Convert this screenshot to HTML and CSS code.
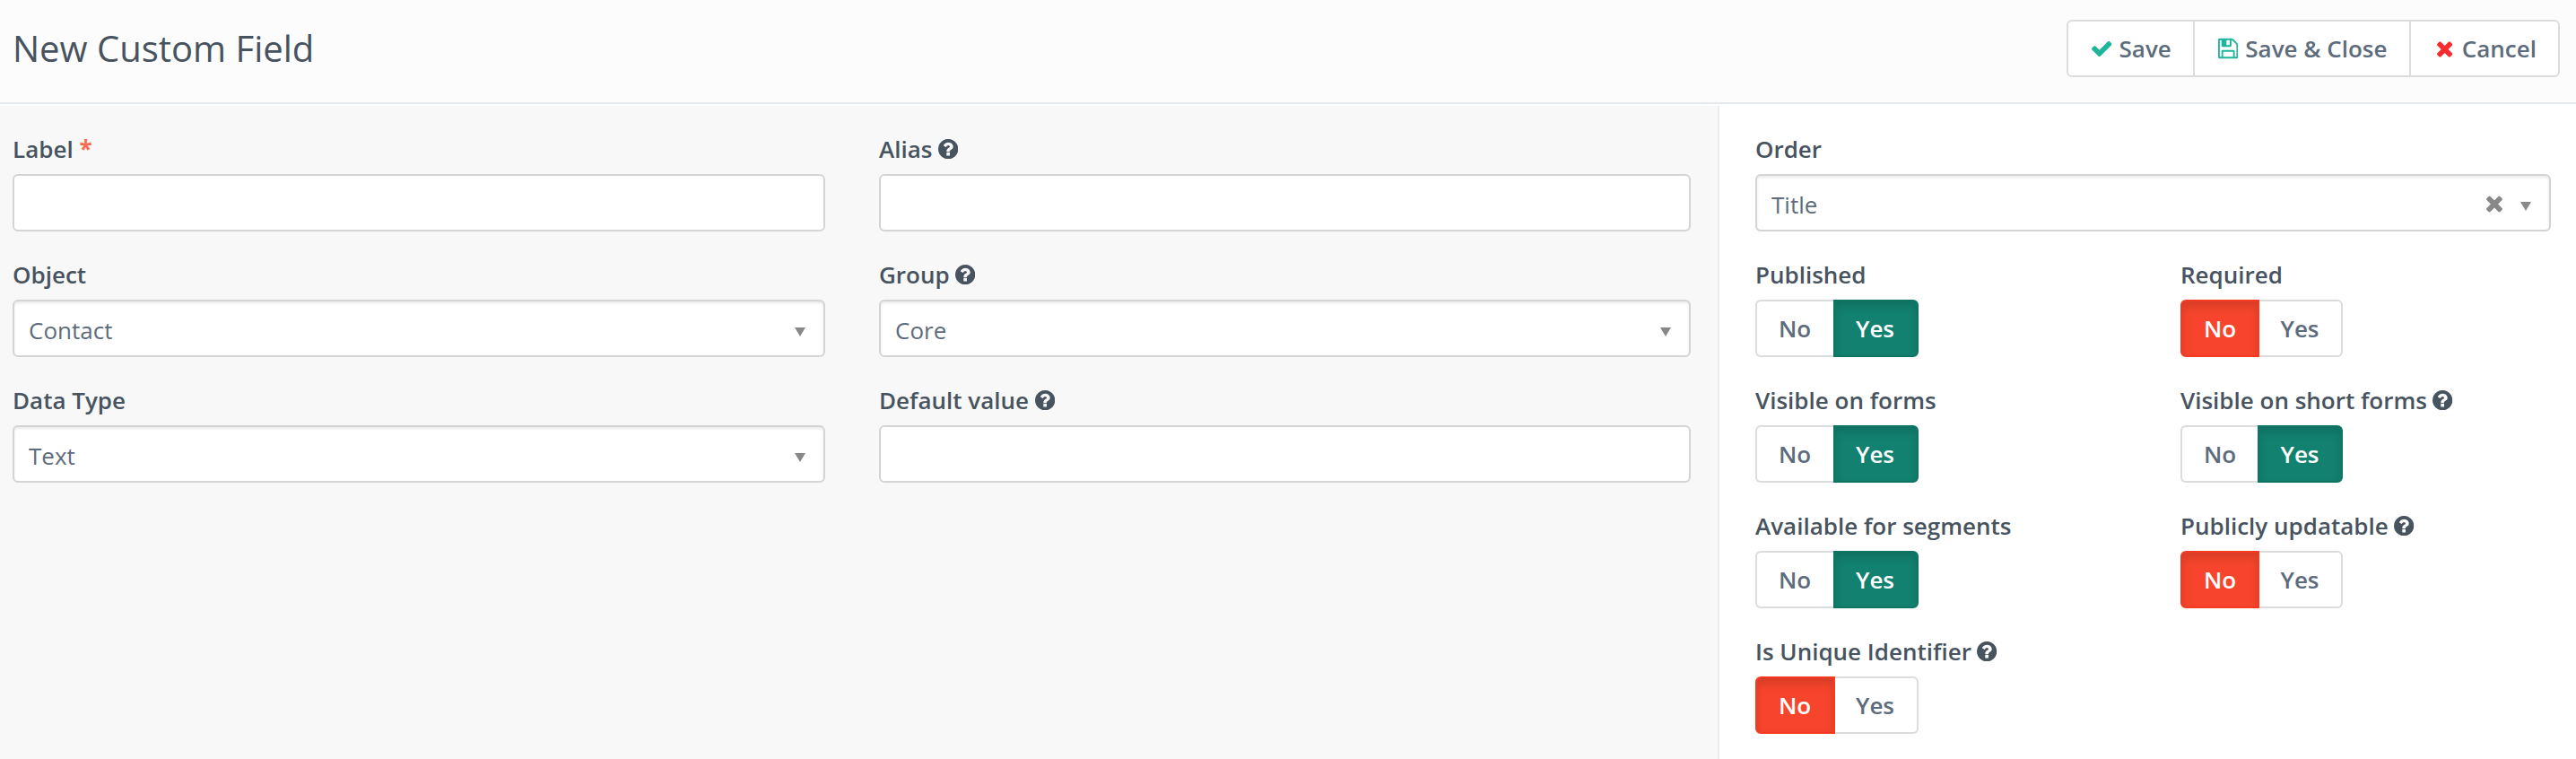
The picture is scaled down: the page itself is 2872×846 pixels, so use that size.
FILE: index.html
```html
<!DOCTYPE html>
<html lang="en">
<head>
<meta charset="utf-8">
<title>New Custom Field</title>
<link rel="stylesheet" href="styles.css">
</head>
<body>
<svg class="sprite" aria-hidden="true">
  <symbol id="check" viewBox="121 0 1550 1792"><path d="M1671 566q0 40-28 68l-724 724-136 136q-28 28-68 28t-68-28l-136-136-362-362q-28-28-28-68t28-68l136-136q28-28 68-28t68 28l294 295 656-657q28-28 68-28t68 28l136 136q28 28 28 68z"/></symbol>
  <symbol id="floppy" viewBox="128 0 1536 1792"><path d="M512 1536h768v-384h-768v384zm896 0h128v-896q0-14-10-38.500t-20-34.500l-281-281q-10-10-34-20t-39-10v416q0 40-28 68t-68 28h-576q-40 0-68-28t-28-68v-416h-128v1280h128v-416q0-40 28-68t68-28h832q40 0 68 28t28 68v416zm-384-928v-320q0-13-9.500-22.500t-22.500-9.500h-192q-13 0-22.500 9.500t-9.500 22.500v320q0 13 9.500 22.500t22.500 9.500h192q13 0 22.500-9.500t9.500-22.500zm640 32v928q0 40-28 68t-68 28h-1344q-40 0-68-28t-28-68v-1344q0-40 28-68t68-28h928q40 0 88 20t76 48l280 280q28 28 48 76t20 88z"/></symbol>
  <symbol id="times" viewBox="302 0 1188 1792"><path d="M1490 1322q0 40-28 68l-136 136q-28 28-68 28t-68-28l-294-294-294 294q-28 28-68 28t-68-28l-136-136q-28-28-28-68t28-68l294-294-294-294q-28-28-28-68t28-68l136-136q28-28 68-28t68 28l294 294 294-294q28-28 68-28t68 28l136 136q28 28 28 68t-28 68l-294 294 294 294q28 28 28 68z"/></symbol>
  <symbol id="help" viewBox="128 128 1536 1536"><path d="M1024 1376v-192q0-14-9-23t-23-9h-192q-14 0-23 9t-9 23v192q0 14 9 23t23 9h192q14 0 23-9t9-23zm256-672q0-88-55.500-163t-138.500-116-170-41q-243 0-371 213-15 24 8 42l132 100q7 6 19 6 16 0 25-12 53-68 86-92 34-24 86-24 48 0 85.500 26t37.500 59q0 38-20 61t-68 45q-63 28-115.500 86.500t-52.500 125.500v36q0 14 9 23t23 9h192q14 0 23-9t9-23q0-19 21.500-49.500t54.500-49.500q32-18 49-28.500t46-35 44.500-48 28-60.500 12.500-81zm384 192q0 209-103 385.500t-279.500 279.500-385.500 103-385.500-103-279.500-279.500-103-385.500 103-385.500 279.500-279.500 385.500-103 385.500 103 279.500 279.500 103 385.500z"/></symbol>
  <symbol id="caret" viewBox="0 0 12 10"><path d="M0 0h12l-6 10z"/></symbol>
</svg>

<header class="page-header">
  <h1 class="title">New Custom Field</h1>
  <div class="actions">
    <button class="action action-save"><svg class="icon icon-check"><use href="#check"/></svg><span>Save</span></button>
    <button class="action action-close"><svg class="icon icon-floppy"><use href="#floppy"/></svg><span>Save &amp; Close</span></button>
    <button class="action action-cancel"><svg class="icon icon-times"><use href="#times"/></svg><span>Cancel</span></button>
  </div>
</header>

<main class="content">
  <section class="main-panel">
    <div class="field">
      <div class="label">Label <span class="required">*</span></div>
      <div class="control"></div>
    </div>
    <div class="field">
      <div class="label">Alias<svg class="help"><use href="#help"/></svg></div>
      <div class="control"></div>
    </div>
    <div class="field">
      <div class="label">Object</div>
      <div class="control select"><span class="value">Contact</span><svg class="caret"><use href="#caret"/></svg></div>
    </div>
    <div class="field">
      <div class="label">Group<svg class="help"><use href="#help"/></svg></div>
      <div class="control select"><span class="value">Core</span><svg class="caret"><use href="#caret"/></svg></div>
    </div>
    <div class="field">
      <div class="label">Data Type</div>
      <div class="control select"><span class="value">Text</span><svg class="caret"><use href="#caret"/></svg></div>
    </div>
    <div class="field">
      <div class="label">Default value<svg class="help"><use href="#help"/></svg></div>
      <div class="control"></div>
    </div>
  </section>

  <aside class="side-panel">
    <div class="field wide">
      <div class="label">Order</div>
      <div class="control select"><span class="value">Title</span><svg class="clear"><use href="#times"/></svg><svg class="caret"><use href="#caret"/></svg></div>
    </div>
    <div class="field">
      <div class="label">Published</div>
      <div class="toggle"><span class="no">No</span><span class="yes on">Yes</span></div>
    </div>
    <div class="field">
      <div class="label">Required</div>
      <div class="toggle narrow"><span class="no on">No</span><span class="yes">Yes</span></div>
    </div>
    <div class="field">
      <div class="label">Visible on forms</div>
      <div class="toggle"><span class="no">No</span><span class="yes on">Yes</span></div>
    </div>
    <div class="field">
      <div class="label">Visible on short forms<svg class="help"><use href="#help"/></svg></div>
      <div class="toggle narrow"><span class="no">No</span><span class="yes on">Yes</span></div>
    </div>
    <div class="field">
      <div class="label">Available for segments</div>
      <div class="toggle"><span class="no">No</span><span class="yes on">Yes</span></div>
    </div>
    <div class="field">
      <div class="label">Publicly updatable<svg class="help"><use href="#help"/></svg></div>
      <div class="toggle narrow"><span class="no on">No</span><span class="yes">Yes</span></div>
    </div>
    <div class="field">
      <div class="label">Is Unique Identifier<svg class="help"><use href="#help"/></svg></div>
      <div class="toggle"><span class="no on">No</span><span class="yes">Yes</span></div>
    </div>
  </aside>
</main>
</body>
</html>
```
FILE: styles.css
```css
* {
  box-sizing: border-box;
}

body {
  margin: 0;
  height: 846px;
  overflow: hidden;
  display: flex;
  flex-direction: column;
  background: #fff;
  color: #47535f;
  font-family: "Open Sans", sans-serif;
  font-size: 26px;
  line-height: 36px;
}

svg {
  fill: currentColor;
  flex: none;
}

.sprite {
  display: none;
}

.page-header {
  flex: none;
  height: 116px;
  padding: 22px 18px 0 14px;
  display: flex;
  justify-content: space-between;
  align-items: flex-start;
  background: #fcfcfc;
  border-bottom: 2px solid #e4e9ee;
}

.title {
  margin: 0;
  font-size: 40px;
  font-weight: 400;
  line-height: 63px;
}

.actions {
  display: flex;
  height: 64px;
  border: 2px solid #dcdcdc;
  border-radius: 6px;
  background: #fff;
}

.action {
  display: flex;
  align-items: center;
  margin: 0;
  padding: 0;
  border: 0;
  background: none;
  color: #5d6c7c;
  font: 600 26px/36px "Open Sans", sans-serif;
}

.action + .action {
  border-left: 2px solid #dcdcdc;
}

.action-save {
  width: 139px;
  padding-left: 26px;
}

.action-close {
  width: 241px;
  padding-left: 26px;
}

.action-cancel {
  flex: none;
  width: 166px;
  padding-left: 28.5px;
}

.icon {
  height: 26px;
  color: #1fb59b;
}

.icon-check {
  width: 22.5px;
  margin-right: 8px;
}

.icon-floppy {
  width: 22.3px;
  margin-right: 8px;
}

.icon-times {
  width: 17.3px;
  margin-right: 11px;
  color: #fa2b2f;
}

.content {
  flex: 1;
  display: flex;
}

.main-panel {
  width: 1917px;
  margin-top: 2px;
  padding: 30px 30px 0 14px;
  border-right: 2px solid #ebedf2;
  background: #f8f8f8;
  display: grid;
  grid-template-columns: 906px 905px;
  column-gap: 60px;
  grid-auto-rows: 140px;
}

.side-panel {
  width: 955px;
  padding: 32px 28px 0 40px;
  display: grid;
  grid-template-columns: 474px 413px;
  grid-auto-rows: 140px;
}

.wide {
  grid-column: 1 / -1;
}

.label {
  display: flex;
  align-items: center;
  height: 46px;
  padding-bottom: 10px;
  font-weight: 600;
  white-space: pre;
}

.required {
  color: #f86b4f;
  font-weight: 700;
}

.help {
  width: 22.3px;
  height: 22.3px;
  margin-left: 6.5px;
}

.control {
  height: 64px;
  border: 2px solid #d4d4d4;
  border-radius: 6px;
  background: #fff;
}

.select {
  display: flex;
  align-items: center;
  padding: 3px 20px 0 16px;
  box-shadow: inset 0 2px 3px rgba(0, 0, 0, 0.09);
  color: #5d6c7c;
}

.value {
  flex: 1;
}

.caret {
  width: 12px;
  height: 10px;
  margin-top: 5px;
  color: #888;
}

.clear {
  width: 18px;
  height: 27px;
  margin: 0 20px 3px 0;
  color: #888;
}

.toggle {
  display: flex;
  width: 182px;
  height: 64px;
  color: #5d6c7c;
  font-weight: 600;
  line-height: 60px;
}

.toggle span {
  border: 2px solid #dcdcdc;
  background: #fff;
}

.no {
  width: 87px;
  padding-left: 24px;
  border-radius: 6px 0 0 6px;
}

.yes {
  flex: 1;
  padding-left: 23px;
  border-radius: 0 6px 6px 0;
}

.toggle .no:not(.on) {
  border-right: 0;
}

.toggle .yes:not(.on) {
  border-left: 0;
}

.toggle .on {
  color: #fff;
  box-shadow: inset 0 6px 10px rgba(0, 0, 0, 0.125);
}

.toggle .no.on {
  width: 89px;
  background: #f6452c;
  border-color: #f43a20;
}

.toggle .yes.on {
  background: #12816f;
  border-color: #107463;
}

.toggle.narrow {
  width: 181px;
}

.toggle.narrow .no {
  width: 86px;
}

.toggle.narrow .no.on {
  width: 88px;
}

.toggle.narrow .yes {
  padding-left: 23.5px;
}
```
